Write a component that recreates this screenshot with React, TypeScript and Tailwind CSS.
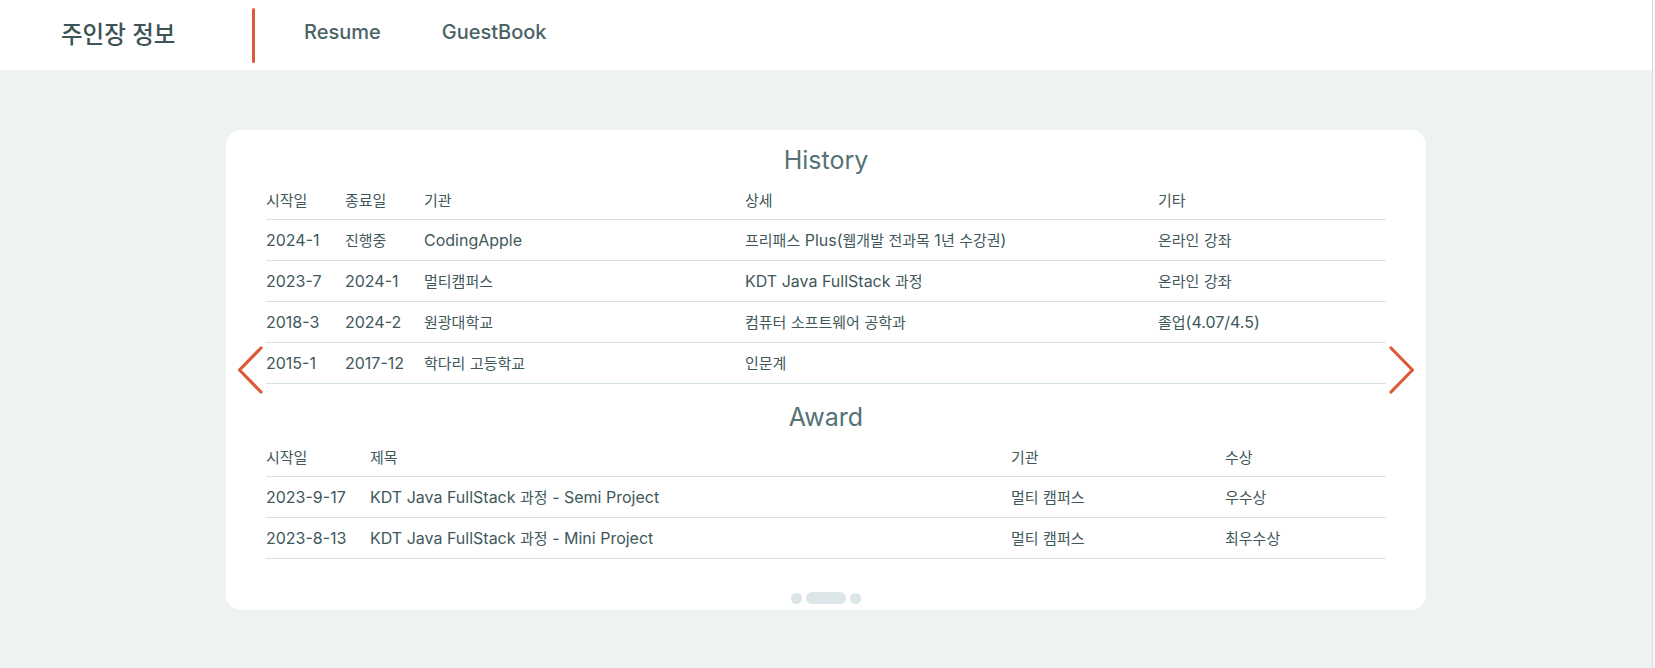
import React from "react";

function T({ s }: { s: string }) {
  const parts = s.split(/([가-힣]+)/);
  return (
    <>
      {parts.map((p, i) =>
        /[가-힣]/.test(p) ? (
          <span key={i} className="text-[15px]">
            {p}
          </span>
        ) : (
          <span key={i}>{p}</span>
        )
      )}
    </>
  );
}

const history = [
  ["2024-1", "진행중", "CodingApple", "프리패스 Plus(웹개발 전과목 1년 수강권)", "온라인 강좌"],
  ["2023-7", "2024-1", "멀티캠퍼스", "KDT Java FullStack 과정", "온라인 강좌"],
  ["2018-3", "2024-2", "원광대학교", "컴퓨터 소프트웨어 공학과", "졸업(4.07/4.5)"],
  ["2015-1", "2017-12", "학다리 고등학교", "인문계", ""],
];

const awards = [
  ["2023-9-17", "KDT Java FullStack 과정 - Semi Project", "멀티 캠퍼스", "우수상"],
  ["2023-8-13", "KDT Java FullStack 과정 - Mini Project", "멀티 캠퍼스", "최우수상"],
];

function Chevron({ dir }: { dir: "left" | "right" }) {
  return (
    <svg
      width="26"
      height="48"
      viewBox="0 0 26 48"
      fill="none"
      stroke="#dc5a37"
      strokeWidth="3.2"
      strokeLinecap="round"
      strokeLinejoin="round"
    >
      {dir === "left" ? <path d="M24 2 L2.5 24 L24 46" /> : <path d="M2 2 L23.5 24 L2 46" />}
    </svg>
  );
}

export default function App() {
  const font = { fontFamily: 'Inter, "Noto Sans CJK KR", sans-serif' };
  return (
    <div className="flex min-h-[668px] w-full bg-[#edf2f2]" style={font}>
      <div className="flex-1 flex flex-col">
        <header className="h-[70px] bg-white flex items-center pl-[61px]">
          <div className="w-[191px] text-[23.5px] font-medium text-[#3d5356] leading-none">
            주인장 정보
          </div>
          <div className="w-[3px] h-[55px] rounded-full bg-[#dc5a37]" />
          <nav className="flex items-center gap-[61px] ml-[49px] pb-[6px] text-[20px] font-medium text-[#4a6366]">
            <span>Resume</span>
            <span>GuestBook</span>
          </nav>
        </header>

        <main className="pt-[60px]">
          <div className="relative mx-auto w-[1200px] h-[480px] bg-white rounded-[15px] px-[40px] pt-[12px] pb-[6px] flex flex-col">
            <div className="absolute left-[11px] top-1/2 -translate-y-1/2 flex">
              <Chevron dir="left" />
            </div>
            <div className="absolute right-[11px] top-1/2 -translate-y-1/2 flex">
              <Chevron dir="right" />
            </div>

            <h2 className="h-[37px] flex items-center justify-center text-[25px] text-[#557275] leading-none">
              History
            </h2>
            <div className="text-[16px] text-[#41585b]">
              <div className="grid grid-cols-[79px_79px_321px_413px_1fr] h-[41px] items-center pt-[3px] border-b border-[#d4e1e2]">
                <span><T s="시작일" /></span>
                <span><T s="종료일" /></span>
                <span><T s="기관" /></span>
                <span><T s="상세" /></span>
                <span><T s="기타" /></span>
              </div>
              {history.map((r, i) => (
                <div
                  key={i}
                  className="grid grid-cols-[79px_79px_321px_413px_1fr] h-[41px] items-center border-b border-[#d4e1e2] whitespace-nowrap"
                >
                  {r.map((c, j) => (
                    <span key={j}><T s={c} /></span>
                  ))}
                </div>
              ))}
            </div>

            <h2 className="mt-[15px] h-[37px] flex items-center justify-center text-[25px] text-[#557275] leading-none">
              Award
            </h2>
            <div className="text-[16px] text-[#41585b]">
              <div className="grid grid-cols-[104px_641px_214px_1fr] h-[41px] items-center pt-[3px] border-b border-[#d4e1e2]">
                <span><T s="시작일" /></span>
                <span><T s="제목" /></span>
                <span><T s="기관" /></span>
                <span><T s="수상" /></span>
              </div>
              {awards.map((r, i) => (
                <div
                  key={i}
                  className="grid grid-cols-[104px_641px_214px_1fr] h-[41px] items-center border-b border-[#d4e1e2] whitespace-nowrap"
                >
                  {r.map((c, j) => (
                    <span key={j}><T s={c} /></span>
                  ))}
                </div>
              ))}
            </div>

            <div className="mt-[33px] flex items-center justify-center gap-[4px]">
              <span className="w-[11px] h-[11px] rounded-full bg-[#dce5e7]" />
              <span className="w-[40px] h-[12px] rounded-full bg-[#dce5e7]" />
              <span className="w-[11px] h-[11px] rounded-full bg-[#dce5e7]" />
            </div>
          </div>
        </main>
      </div>
      <div className="w-[3px] bg-[#f7f7f7] border-l border-[#dcdcdc]" />
    </div>
  );
}
